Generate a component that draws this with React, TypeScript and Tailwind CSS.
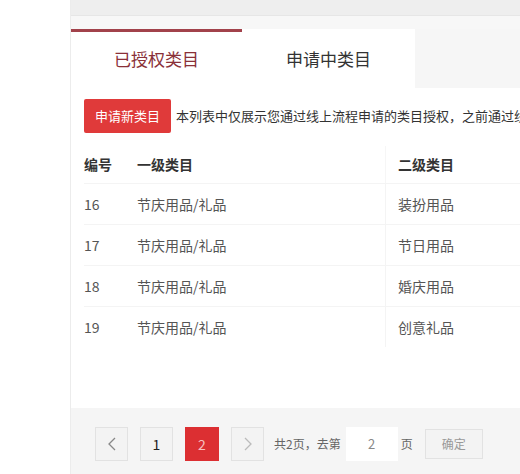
import React from "react";

const rows = [
  { id: "16", a: "节庆用品/礼品", b: "装扮用品" },
  { id: "17", a: "节庆用品/礼品", b: "节日用品" },
  { id: "18", a: "节庆用品/礼品", b: "婚庆用品" },
  { id: "19", a: "节庆用品/礼品", b: "创意礼品" },
];

export default function App() {
  return (
    <div
      className="flex w-[520px] h-[474px] overflow-hidden bg-white"
      style={{ fontFamily: '"Noto Sans CJK SC", "Noto Sans", sans-serif' }}
    >
      <div className="w-[70px] shrink-0 bg-white" />
      <div className="flex-1 min-w-0 flex flex-col bg-[#f6f6f6] border-l border-[#ececec]">
        <div className="h-[16px] shrink-0 bg-[#eeeeee] border-b border-[#e6e6e6]" />
        <div className="h-[13px] shrink-0 bg-[#f7f7f7]" />
        <div className="flex h-[59px] shrink-0 bg-[#f6f6f6]">
          <div className="w-[171px] bg-white border-t-[3px] border-[#a2424b] flex items-center justify-center text-[17px] text-[#8a3038] pb-[2px]">
            已授权类目
          </div>
          <div className="w-[173px] bg-white flex items-center justify-center text-[17px] text-[#333]">
            申请中类目
          </div>
        </div>
        <div className="flex-1 bg-white flex flex-col pl-[13px]">
          <div className="flex items-center mt-[11px] h-[34px] whitespace-nowrap overflow-hidden">
            <div className="h-[34px] w-[87px] shrink-0 rounded-[2px] bg-[#e03a3a] text-white text-[13px] flex items-center justify-center">
              申请新类目
            </div>
            <span className="ml-[5px] text-[13px] text-[#333]">
              本列表中仅展示您通过线上流程申请的类目授权，之前通过线
            </span>
          </div>
          <div className="mt-[13px] flex flex-col text-[14px]">
            <div className="flex h-[37px] items-center font-bold text-[#333]">
              <div className="w-[53px]">编号</div>
              <div className="w-[249px] h-full flex items-center border-r border-[#f6f6f6]">一级类目</div>
              <div className="pl-[12px]">二级类目</div>
            </div>
            {rows.map((r) => (
              <div
                key={r.id}
                className="flex h-[41px] items-center text-[#555] border-t border-[#f4f4f4]"
              >
                <div className="w-[53px]">{r.id}</div>
                <div className="w-[249px] h-full flex items-center border-r border-[#f4f4f4]">
                  {r.a}
                </div>
                <div className="pl-[12px]">{r.b}</div>
              </div>
            ))}
          </div>
        </div>
        <div className="h-[66px] shrink-0 bg-[#f5f5f5] flex items-start pt-[19px] pl-[24px] gap-[12px] text-[13px]">
          <div className="w-[33px] h-[34px] bg-[#f3f3f3] border border-[#e2e2e2] flex items-center justify-center text-[#777]">
            <svg width="10" height="14" viewBox="0 0 10 14" fill="none">
              <path d="M8 1L2 7l6 6" stroke="#888" strokeWidth="1.3" />
            </svg>
          </div>
          <div className="w-[33px] h-[34px] bg-[#f3f3f3] border border-[#e2e2e2] flex items-center justify-center text-[#222] text-[14px]">
            1
          </div>
          <div className="w-[34px] h-[34px] bg-[#dc2f32] flex items-center justify-center text-[#f6c0c0] text-[14px]">
            2
          </div>
          <div className="w-[33px] h-[34px] bg-[#f3f3f3] border border-[#e2e2e2] flex items-center justify-center">
            <svg width="10" height="14" viewBox="0 0 10 14" fill="none">
              <path d="M2 1l6 6-6 6" stroke="#bbb" strokeWidth="1.3" />
            </svg>
          </div>
          <div className="flex items-center h-[34px] -ml-[2px] text-[12px] text-[#666] whitespace-nowrap">
            共2页，去第
            <div className="ml-[5px] w-[52px] h-[34px] bg-white flex items-center justify-center text-[13px] text-[#888]">
              2
            </div>
            <span className="ml-[3px]">页</span>
            <div className="ml-[12px] w-[58px] h-[30px] bg-[#f3f3f3] border border-[#e2e2e2] flex items-center justify-center text-[#999] text-[12px]">
              确定
            </div>
          </div>
        </div>
      </div>
    </div>
  );
}
